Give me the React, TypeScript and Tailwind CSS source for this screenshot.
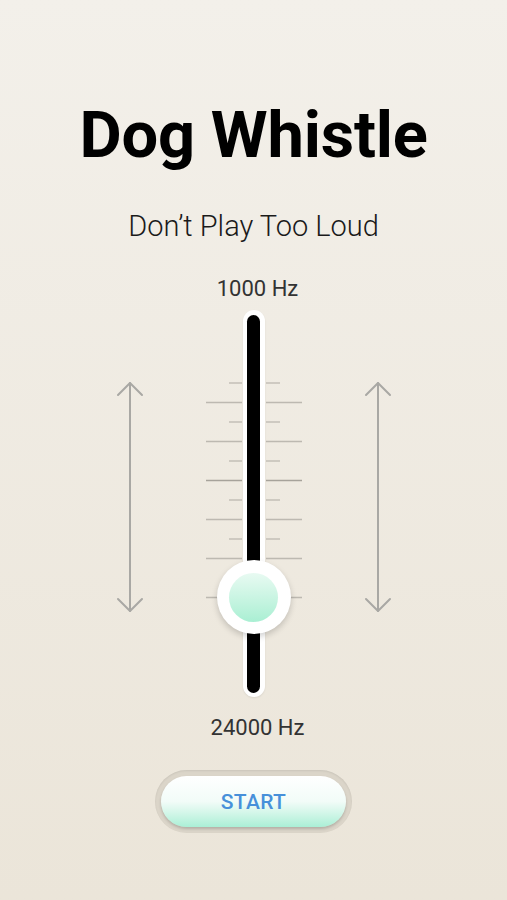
import React from "react";

const TICK_TOP = 73;
const TICK_STEP = 19.5;

function ScaleTicks() {
  const rows = Array.from({ length: 12 }, (_, i) => i);
  return (
    <svg
      className="absolute inset-0"
      width="100"
      height="387"
      viewBox="0 0 100 387"
    >
      {rows.map((i) => {
        const y = TICK_TOP + i * TICK_STEP;
        const long = i % 2 === 1;
        const stroke = i === 5 ? "#a7a39b" : "#bdb9b1";
        return (
          <g key={i} stroke={stroke} strokeWidth="1.3">
            <line x1={long ? 2 : 25} y1={y} x2={38} y2={y} />
            <line x1={62} y1={y} x2={long ? 98 : 76} y2={y} />
          </g>
        );
      })}
    </svg>
  );
}

function Arrow({ className }: { className?: string }) {
  return (
    <svg className={className} width="28" height="232" viewBox="0 0 28 232">
      <g
        fill="none"
        stroke="#a9a8a4"
        strokeWidth="2"
        strokeLinecap="round"
        strokeLinejoin="round"
      >
        <path d="M14 2 L14 230" />
        <path d="M2 14 L14 2 L26 14" />
        <path d="M2 218 L14 230 L26 218" />
      </g>
    </svg>
  );
}

function FrequencySlider() {
  return (
    <div className="relative w-[100px] h-[387px]">
      <ScaleTicks />
      <div className="absolute left-[39px] top-0 w-[22px] h-[387px] rounded-full bg-white p-[4.5px] shadow-[0_1px_2px_rgba(0,0,0,0.08)]">
        <div className="w-full h-full rounded-full bg-black" />
      </div>
      <div className="absolute left-[13px] top-[250px] w-[74px] h-[74px] rounded-full bg-white flex items-center justify-center shadow-[0_3px_6px_rgba(0,0,0,0.18)]">
        <div className="w-[49px] h-[49px] rounded-full bg-gradient-to-b from-[#e8faf2] to-[#a9efd3]" />
      </div>
    </div>
  );
}

export default function App() {
  return (
    <div
      className="min-h-screen w-full flex flex-col items-center bg-gradient-to-b from-[#f3f0ea] to-[#ebe5d9]"
      style={{ fontFamily: "Roboto, 'Noto Sans', sans-serif" }}
    >
      <h1 className="mt-[103px] text-[65px] leading-none font-bold text-black tracking-[-0.2px]">
        Dog Whistle
      </h1>
      <p className="mt-[44px] text-[29px] leading-none font-light text-[#1a1a1a]">
        Don’t Play Too Loud
      </p>
      <div className="mt-[37px] ml-[8px] text-[22px] leading-none text-[#333]">
        1000 Hz
      </div>
      <div className="mt-[10px] flex items-start gap-[60px]">
        <Arrow className="mt-[71px]" />
        <FrequencySlider />
        <Arrow className="mt-[71px]" />
      </div>
      <div className="mt-[20px] ml-[8px] text-[22px] leading-none text-[#333]">
        24000 Hz
      </div>
      <div className="mt-[31px] w-[197px] h-[63px] rounded-full bg-[#dbd5c9] p-[6px] shadow-[inset_0_1px_2px_rgba(0,0,0,0.08)]">
        <button className="w-full h-full pt-[3px] rounded-full bg-gradient-to-b from-white via-[#f2fcf8] to-[#aaefd6] shadow-[0_2px_3px_rgba(0,0,0,0.18)] flex items-center justify-center">
          <span className="text-[21px] font-medium text-[#4790da] tracking-[0.3px]">
            START
          </span>
        </button>
      </div>
    </div>
  );
}
